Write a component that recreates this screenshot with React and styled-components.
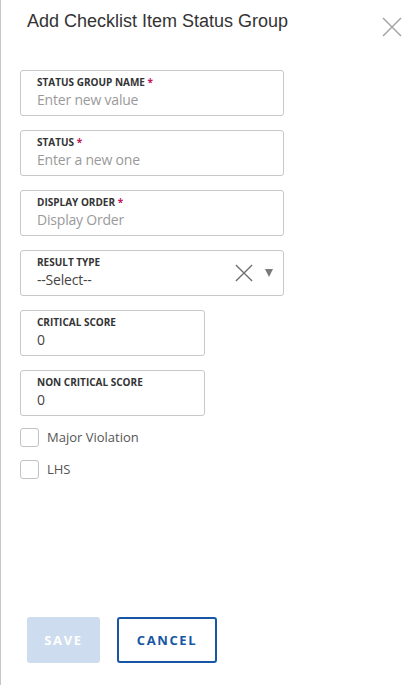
import React from 'react';
import styled, { createGlobalStyle } from 'styled-components';

const GlobalStyle = createGlobalStyle`
  html, body { margin: 0; padding: 0; background: #fff; }
  * { box-sizing: border-box; }
`;

const Panel = styled.div`
  height: 685px;
  border-left: 1px solid #c6c6c6;
  display: flex;
  flex-direction: column;
  font-family: "Open Sans", sans-serif;
`;

const Header = styled.div`
  display: flex;
  justify-content: space-between;
  align-items: flex-start;
  padding: 10px 16px 0 26px;
  height: 70px;
`;

const Title = styled.h1`
  margin: 0;
  font-family: "Liberation Sans", Arial, sans-serif;
  font-weight: normal;
  font-size: 18px;
  line-height: 22px;
  color: #333;
`;

const CloseButton = styled.button`
  border: none;
  background: none;
  padding: 0;
  margin-top: 7px;
  width: 20px;
  height: 20px;
  cursor: pointer;
`;

const Form = styled.div`
  display: flex;
  flex-direction: column;
  gap: 14px;
  padding-left: 19px;
`;

const FieldBox = styled.div`
  width: ${p => (p.narrow ? '185px' : '264px')};
  height: 46px;
  border: 1px solid #c8c8c8;
  border-radius: 3px;
  padding: 0 16px 0 16px;
  display: flex;
  align-items: center;
`;

const FieldBody = styled.div`
  flex: 1;
  display: flex;
  flex-direction: column;
`;

const Label = styled.label`
  font-size: 10px;
  line-height: 13px;
  font-weight: 700;
  color: #333;
  text-transform: uppercase;
`;

const Req = styled.span`
  color: #c2185b;
`;

const Value = styled.div`
  font-size: 14px;
  line-height: 21px;
  color: ${p => (p.placeholder ? '#9a9a9a' : '#444')};
  letter-spacing: -0.2px;
`;

const SelectIcons = styled.div`
  display: flex;
  align-items: center;
  gap: 12px;
  margin-right: -6px;
`;

const Triangle = styled.span`
  width: 0;
  height: 0;
  border-left: 4px solid transparent;
  border-right: 4px solid transparent;
  border-top: 8px solid #7a7a7a;
`;

const CheckRow = styled.label`
  display: flex;
  align-items: center;
  gap: 8px;
  font-size: 13px;
  color: #555;
  height: 18px;
`;

const CheckBox = styled.span`
  width: 19px;
  height: 19px;
  border: 1px solid #c2c2c2;
  border-radius: 3px;
`;

const Checks = styled.div`
  display: flex;
  flex-direction: column;
  gap: 14px;
  margin-top: -2px;
`;

const Footer = styled.div`
  margin-top: auto;
  display: flex;
  align-items: center;
  gap: 17px;
  padding: 0 0 22px 26px;
`;

const Button = styled.button`
  height: 46px;
  font-family: "Open Sans", sans-serif;
  font-size: 13px;
  font-weight: 700;
  letter-spacing: 1.6px;
  border-radius: 3px;
  cursor: pointer;
  ${p =>
    p.primary
      ? `
    width: 73px;
    background: #cddcee;
    color: #fff;
    border: none;
  `
      : `
    width: 100px;
    background: #fff;
    color: #1656a4;
    border: 2px solid #1656a4;
  `}
`;

const XIcon = ({ size, color, width }) => (
  <svg width={size} height={size} viewBox="0 0 20 20">
    <path d="M1 1 L19 19 M19 1 L1 19" stroke={color} strokeWidth={width} fill="none" />
  </svg>
);

const Field = ({ label, required, value, placeholder, narrow, children }) => (
  <FieldBox narrow={narrow}>
    <FieldBody>
      <Label>
        {label}
        {required && <Req> *</Req>}
      </Label>
      <Value placeholder={placeholder ? 1 : undefined}>{value || placeholder}</Value>
    </FieldBody>
    {children}
  </FieldBox>
);

export default function App() {
  return (
    <>
      <GlobalStyle />
      <Panel>
        <Header>
          <Title>Add Checklist Item Status Group</Title>
          <CloseButton aria-label="Close">
            <XIcon size={20} color="#a0a0a0" width={1.4} />
          </CloseButton>
        </Header>
        <Form>
          <Field label="Status Group Name" required placeholder="Enter new value" />
          <Field label="Status" required placeholder="Enter a new one" />
          <Field label="Display Order" required placeholder="Display Order" />
          <Field label="Result Type" value="--Select--">
            <SelectIcons>
              <XIcon size={18} color="#6e6e6e" width={1.5} />
              <Triangle />
            </SelectIcons>
          </Field>
          <Field label="Critical Score" value="0" narrow />
          <Field label="Non Critical Score" value="0" narrow />
          <Checks>
            <CheckRow>
              <CheckBox />
              Major Violation
            </CheckRow>
            <CheckRow>
              <CheckBox />
              LHS
            </CheckRow>
          </Checks>
        </Form>
        <Footer>
          <Button primary>SAVE</Button>
          <Button>CANCEL</Button>
        </Footer>
      </Panel>
    </>
  );
}
